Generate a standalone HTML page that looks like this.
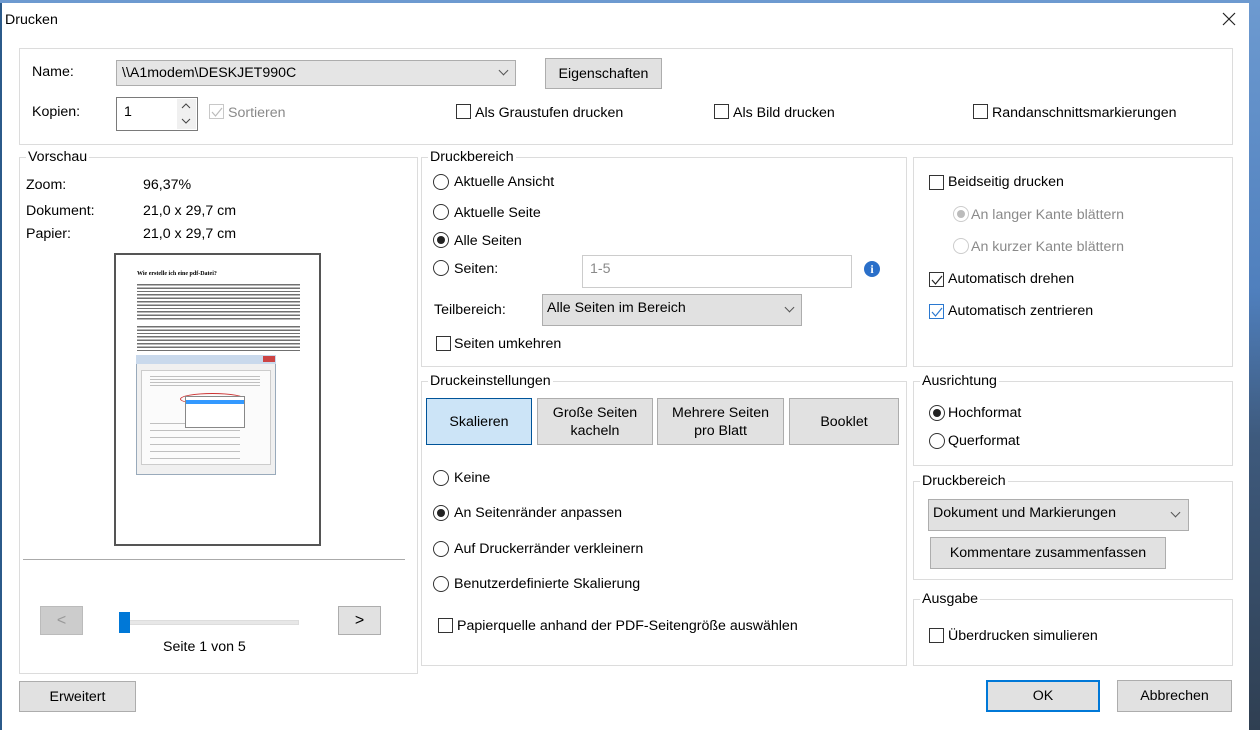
<!DOCTYPE html>
<html><head><meta charset="utf-8"><style>
*{box-sizing:border-box;margin:0;padding:0}
body{width:1260px;height:730px;overflow:hidden;position:relative;font-family:"Liberation Sans",sans-serif;font-size:14px;color:#000;background:linear-gradient(#6d9ad0,#4f7fbd 40%,#3e5a7d 60%,#2f3f52)}
.a{position:absolute}
#dlg{left:0;top:3px;width:1249px;height:727px;background:#fff;border-left:2px solid #2b5a8a}
.t{position:absolute;line-height:18px;white-space:nowrap;font-size:14.2px}
.g{position:absolute;border:1px solid #dcdcdc}
.lg{position:absolute;background:#fff;padding:0 2px;line-height:16px;top:-9px;left:6px;font-size:14.2px}
.btn{position:absolute;background:#e1e1e1;border:1px solid #adadad;text-align:center;display:flex;align-items:center;justify-content:center;line-height:18px;font-size:14.2px}
.cb{position:absolute;width:15px;height:15px;border:1px solid #333;background:#fff}
.rb{position:absolute;width:16px;height:16px;border:1px solid #333;border-radius:50%;background:#fff}
.rb.on::after{content:"";position:absolute;left:3px;top:3px;width:8px;height:8px;border-radius:50%;background:#222}
.dis{color:#8a8a8a}
.chev{position:absolute;width:7px;height:7px;border-right:1px solid #555;border-bottom:1px solid #555;transform:rotate(45deg)}
</style></head><body>
<div id="dlg" class="a">
<div class="t" style="left:3px;top:8px">Drucken</div>
<svg class="a" style="left:1220px;top:9px" width="14" height="14"><path d="M1 1L13 13M13 1L1 13" stroke="#222" stroke-width="1.2"/></svg>

<div class="g" style="left:17px;top:45px;width:1214px;height:97px"></div>
<div class="t" style="left:30px;top:60px">Name:</div>
<div class="a" style="left:114px;top:57px;width:400px;height:26px;background:#e5e5e5;border:1px solid #adadad"></div>
<div class="t" style="left:120px;top:61px">\\A1modem\DESKJET990C</div>
<div class="chev" style="left:498px;top:64px"></div>
<div class="btn" style="left:543px;top:55px;width:117px;height:31px">Eigenschaften</div>
<div class="t" style="left:30px;top:100px">Kopien:</div>
<div class="a" style="left:114px;top:94px;width:82px;height:34px;border:1px solid #7a7a7a"></div>
<div class="t" style="left:122px;top:100px">1</div>
<div class="a" style="left:175px;top:96px;width:19px;height:30px;background:#f0f0f0"></div>
<svg class="a" style="left:179px;top:99px" width="10" height="24"><path d="M1 6L5 2L9 6M1 17L5 21L9 17" stroke="#444" fill="none"/></svg>
<div class="cb" style="left:207px;top:101px;border-color:#c8c8c8"></div>
<svg class="a" style="left:209px;top:103px" width="12" height="12"><path d="M1 6L4.5 10L11 2" stroke="#bbb" fill="none" stroke-width="1.2"/></svg>
<div class="t dis" style="left:226px;top:101px">Sortieren</div>
<div class="cb" style="left:454px;top:101px"></div><div class="t" style="left:473px;top:101px">Als Graustufen drucken</div>
<div class="cb" style="left:712px;top:101px"></div><div class="t" style="left:731px;top:101px">Als Bild drucken</div>
<div class="cb" style="left:971px;top:101px"></div><div class="t" style="left:990px;top:101px">Randanschnittsmarkierungen</div>

<div class="g" style="left:17px;top:154px;width:399px;height:517px"><div class="lg">Vorschau</div></div>
<div class="t" style="left:24px;top:173px">Zoom:</div><div class="t" style="left:141px;top:173px">96,37%</div>
<div class="t" style="left:24px;top:199px">Dokument:</div><div class="t" style="left:141px;top:199px">21,0 x 29,7 cm</div>
<div class="t" style="left:24px;top:222px">Papier:</div><div class="t" style="left:141px;top:222px">21,0 x 29,7 cm</div>
<div class="a" style="left:112px;top:250px;width:207px;height:293px;border:2px solid #555;background:#fff"></div>
<div class="a" style="left:135px;top:267px;font-family:'Liberation Serif',serif;font-size:6px;font-weight:bold;line-height:8px">Wie erstelle ich eine pdf-Datei?</div>
<div class="a" style="left:135px;top:281px;width:163px;height:37px;background:repeating-linear-gradient(#333 0 1.4px,#fff 1.4px 3.4px);opacity:.7"></div>
<div class="a" style="left:135px;top:323px;width:163px;height:26px;background:repeating-linear-gradient(#333 0 1.4px,#fff 1.4px 3.4px);opacity:.7"></div>
<div class="a" style="left:134px;top:352px;width:140px;height:120px;background:#f0f0f0;border:1px solid #9ab"></div>
<div class="a" style="left:134px;top:352px;width:140px;height:9px;background:#c9d9ec"></div>
<div class="a" style="left:261px;top:353px;width:12px;height:6px;background:#c44"></div>
<div class="a" style="left:139px;top:367px;width:130px;height:95px;background:#fbfbfb;border:1px solid #ccc"></div>
<div class="a" style="left:148px;top:373px;width:110px;height:12px;background:repeating-linear-gradient(#999 0 1px,transparent 1px 3px);opacity:.6"></div>
<div class="a" style="left:148px;top:420px;width:90px;height:40px;background:repeating-linear-gradient(#999 0 1px,transparent 1px 7px);opacity:.6"></div>
<div class="a" style="left:178px;top:390px;width:65px;height:12px;border:1px solid #c33;border-radius:50%"></div>
<div class="a" style="left:183px;top:393px;width:60px;height:32px;background:#fff;border:1px solid #888"></div>
<div class="a" style="left:184px;top:397px;width:58px;height:4px;background:#39f"></div>
<div class="a" style="left:21px;top:556px;width:382px;height:1px;background:#aaa"></div>
<div class="btn" style="left:38px;top:603px;width:43px;height:29px;background:#ccc;border-color:#bbb;color:#999;font-size:16px">&lt;</div>
<div class="a" style="left:119px;top:617px;width:178px;height:5px;background:#e7e7e7;border:1px solid #ddd"></div>
<div class="a" style="left:117px;top:609px;width:11px;height:21px;background:#0078d7"></div>
<div class="btn" style="left:336px;top:603px;width:43px;height:29px;font-size:16px">&gt;</div>
<div class="t" style="left:161px;top:635px">Seite 1 von 5</div>
<div class="btn" style="left:17px;top:678px;width:117px;height:31px">Erweitert</div>

<div class="g" style="left:419px;top:154px;width:486px;height:210px"><div class="lg">Druckbereich</div></div>
<div class="rb" style="left:431px;top:171px"></div><div class="t" style="left:452px;top:170px">Aktuelle Ansicht</div>
<div class="rb" style="left:431px;top:201px"></div><div class="t" style="left:452px;top:201px">Aktuelle Seite</div>
<div class="rb on" style="left:431px;top:229px"></div><div class="t" style="left:452px;top:229px">Alle Seiten</div>
<div class="rb" style="left:431px;top:257px"></div><div class="t" style="left:452px;top:257px">Seiten:</div>
<div class="a" style="left:580px;top:252px;width:270px;height:33px;border:1px solid #ccc"></div>
<div class="t dis" style="left:588px;top:257px">1-5</div>
<div class="a" style="left:862px;top:258px;width:16px;height:16px;border-radius:50%;background:#2a6fc9;color:#fff;font-weight:bold;font-size:12px;line-height:16px;text-align:center;font-family:'Liberation Serif',serif">i</div>
<div class="t" style="left:432px;top:298px">Teilbereich:</div>
<div class="a" style="left:540px;top:291px;width:260px;height:32px;background:#e1e1e1;border:1px solid #adadad"></div>
<div class="t" style="left:545px;top:296px">Alle Seiten im Bereich</div>
<div class="chev" style="left:784px;top:301px"></div>
<div class="cb" style="left:434px;top:333px"></div><div class="t" style="left:452px;top:332px">Seiten umkehren</div>

<div class="g" style="left:911px;top:154px;width:320px;height:210px"></div>
<div class="cb" style="left:927px;top:172px"></div><div class="t" style="left:946px;top:170px">Beidseitig drucken</div>
<div class="rb on dis" style="left:951px;top:203px;border-color:#ccc"></div>
<style>.rb.dis.on::after{background:#bbb}</style>
<div class="t dis" style="left:969px;top:203px">An langer Kante blättern</div>
<div class="rb" style="left:951px;top:235px;border-color:#ccc"></div><div class="t dis" style="left:969px;top:235px">An kurzer Kante blättern</div>
<div class="cb" style="left:927px;top:269px"></div>
<svg class="a" style="left:929px;top:271px" width="12" height="12"><path d="M1 6L4.5 10L11 2" stroke="#222" fill="none" stroke-width="1.2"/></svg>
<div class="t" style="left:946px;top:267px">Automatisch drehen</div>
<div class="cb" style="left:927px;top:301px;border-color:#2a78d0"></div>
<svg class="a" style="left:929px;top:303px" width="12" height="12"><path d="M1 6L4.5 10L11 2" stroke="#2a78d0" fill="none" stroke-width="1.2"/></svg>
<div class="t" style="left:946px;top:299px">Automatisch zentrieren</div>

<div class="g" style="left:419px;top:378px;width:486px;height:285px"><div class="lg">Druckeinstellungen</div></div>
<div class="btn" style="left:424px;top:395px;width:106px;height:47px;background:#cce4f7;border-color:#005499">Skalieren</div>
<div class="btn" style="left:535px;top:395px;width:116px;height:47px">Große Seiten<br>kacheln</div>
<div class="btn" style="left:655px;top:395px;width:127px;height:47px">Mehrere Seiten<br>pro Blatt</div>
<div class="btn" style="left:787px;top:395px;width:110px;height:47px">Booklet</div>
<div class="rb" style="left:431px;top:467px"></div><div class="t" style="left:452px;top:466px">Keine</div>
<div class="rb on" style="left:431px;top:502px"></div><div class="t" style="left:452px;top:501px">An Seitenränder anpassen</div>
<div class="rb" style="left:431px;top:538px"></div><div class="t" style="left:452px;top:537px">Auf Druckerränder verkleinern</div>
<div class="rb" style="left:431px;top:573px"></div><div class="t" style="left:452px;top:572px">Benutzerdefinierte Skalierung</div>
<div class="cb" style="left:436px;top:615px"></div><div class="t" style="left:455px;top:614px">Papierquelle anhand der PDF-Seitengröße auswählen</div>

<div class="g" style="left:911px;top:378px;width:320px;height:85px"><div class="lg">Ausrichtung</div></div>
<div class="rb on" style="left:927px;top:402px"></div><div class="t" style="left:946px;top:401px">Hochformat</div>
<div class="rb" style="left:927px;top:430px"></div><div class="t" style="left:946px;top:429px">Querformat</div>

<div class="g" style="left:911px;top:478px;width:320px;height:99px"><div class="lg">Druckbereich</div></div>
<div class="a" style="left:926px;top:496px;width:261px;height:32px;background:#e1e1e1;border:1px solid #adadad"></div>
<div class="t" style="left:931px;top:501px">Dokument und Markierungen</div>
<div class="chev" style="left:1170px;top:506px"></div>
<div class="btn" style="left:928px;top:534px;width:236px;height:32px">Kommentare zusammenfassen</div>

<div class="g" style="left:911px;top:596px;width:320px;height:67px"><div class="lg">Ausgabe</div></div>
<div class="cb" style="left:927px;top:625px"></div><div class="t" style="left:946px;top:624px">Überdrucken simulieren</div>

<div class="btn" style="left:984px;top:677px;width:114px;height:32px;border:2px solid #0078d7">OK</div>
<div class="btn" style="left:1115px;top:677px;width:115px;height:32px">Abbrechen</div>
</div>
</body></html>
